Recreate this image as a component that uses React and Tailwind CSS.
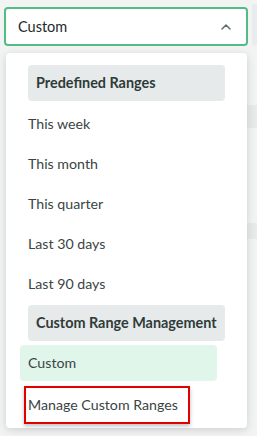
import { ChevronUp } from 'lucide-react';

const predefined = ['This week', 'This month', 'This quarter', 'Last 30 days', 'Last 90 days'];

function GroupHeader({ children }) {
  return (
    <div className="mx-[22px] flex h-[36px] items-center rounded-[4px] bg-[#e7eaea] px-2 text-[14.4px] font-bold text-[#2f3b39]">
      {children}
    </div>
  );
}

export default function App() {
  return (
    <div
      className="flex h-[436px] w-[257px] overflow-hidden bg-[#f2f4f4] text-[#36403f]"
      style={{ fontFamily: 'Lato, "Noto Sans", sans-serif' }}
    >
      <div className="flex w-[249px] shrink-0 flex-col pl-[4px] pt-[7px]">
        {/* select */}
        <div className="flex h-[39px] w-[244px] items-center justify-between rounded-[4px] border-2 border-[#55bb86] bg-white px-[12px]">
          <span className="text-[14.5px] text-[#1f2a2a]">Custom</span>
          <ChevronUp size={16} strokeWidth={2.2} className="text-[#5b6d68]" />
        </div>

        {/* menu */}
        <div className="relative z-10 ml-[2px] mt-[7px] flex w-[241px] flex-col rounded-[4px] bg-white pb-[4px] pt-[12px] shadow-[0_2px_8px_rgba(0,0,0,0.15)]">
          <GroupHeader>Predefined Ranges</GroupHeader>
          <div className="mt-[3px] flex flex-col">
            {predefined.map((label) => (
              <div key={label} className="flex h-[40px] items-center pl-[22px] text-[14.2px] text-[#3a4443]">
                {label}
              </div>
            ))}
          </div>
          <div className="mt-[1px]">
            <GroupHeader>Custom Range Management</GroupHeader>
          </div>
          <div className="ml-[14px] mt-[4px] flex h-[36px] w-[197px] items-center rounded-[4px] bg-[#e0f6ea] pl-[8px] text-[14.2px] text-[#3a4443]">
            Custom
          </div>
          <div className="ml-[18px] mt-[5px] flex h-[38px] w-[166px] items-center border-2 border-[#e00000] pl-[2px] text-[14.2px] text-[#3a4443] shadow-[0_2px_4px_rgba(0,0,0,0.25)]">
            Manage Custom Ranges
          </div>
        </div>
      </div>

      {/* page content peeking out on the right */}
      <div className="-ml-[2px] flex flex-1 flex-col">
        <div className="ml-[5px] mt-[4px] h-[42px] rounded-[4px] bg-[#e9ecec]" />
        <div className="mt-[59px] h-[23px] bg-[#e8eaea]" />
        <div className="mt-[95px] h-[16px] bg-[#e8eaea]" />
      </div>
    </div>
  );
}
